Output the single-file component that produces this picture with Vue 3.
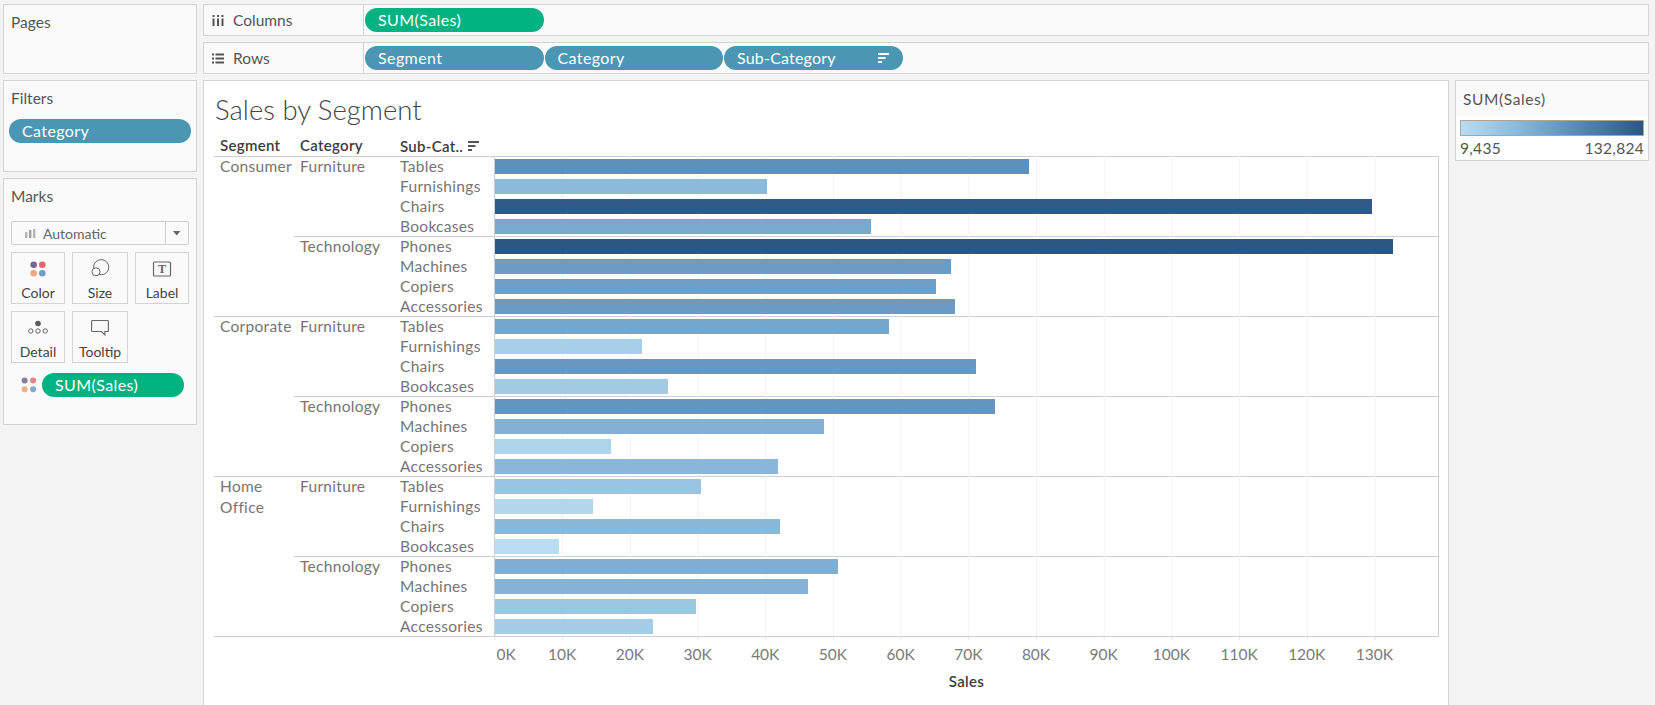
<script setup>
const data = [
  { seg: ['Consumer'], cats: [
    { name: 'Furniture', rows: [['Tables', 79.0], ['Furnishings', 40.2], ['Chairs', 129.8], ['Bookcases', 55.6]] },
    { name: 'Technology', rows: [['Phones', 132.8], ['Machines', 67.5], ['Copiers', 65.3], ['Accessories', 68.1]] }
  ] },
  { seg: ['Corporate'], cats: [
    { name: 'Furniture', rows: [['Tables', 58.3], ['Furnishings', 21.8], ['Chairs', 71.2], ['Bookcases', 25.6]] },
    { name: 'Technology', rows: [['Phones', 74.0], ['Machines', 48.6], ['Copiers', 17.1], ['Accessories', 41.9]] }
  ] },
  { seg: ['Home', 'Office'], cats: [
    { name: 'Furniture', rows: [['Tables', 30.4], ['Furnishings', 14.5], ['Chairs', 42.1], ['Bookcases', 9.5]] },
    { name: 'Technology', rows: [['Phones', 50.8], ['Machines', 46.3], ['Copiers', 29.8], ['Accessories', 23.4]] }
  ] }
]
const ticks = ['10K', '20K', '30K', '40K', '50K', '60K', '70K', '80K', '90K', '100K', '110K', '120K', '130K']
const stops = [
  [0, [185, 221, 241]],
  [0.25, [140, 186, 219]],
  [0.56, [95, 143, 187]],
  [1, [42, 87, 131]]
]
function barColor(v) {
  const t = Math.min(1, Math.max(0, (v - 9.435) / 123.389))
  let i = 0
  while (i < stops.length - 2 && t > stops[i + 1][0]) i++
  const [a, ca] = stops[i]
  const [b, cb] = stops[i + 1]
  const k = (t - a) / (b - a)
  const c = ca.map((x, j) => Math.round(x + (cb[j] - x) * k))
  return `rgb(${c[0]},${c[1]},${c[2]})`
}
function barStyle(v) {
  return { width: (v * 6.76).toFixed(1) + 'px', background: barColor(v) }
}
</script>

<template>
  <div class="page">
    <aside class="left">
      <section class="panel pages"><div class="ptitle">Pages</div></section>
      <section class="panel filters">
        <div class="ptitle">Filters</div>
        <div class="pill blue filter-pill">Category</div>
      </section>
      <section class="panel marks">
        <div class="ptitle">Marks</div>
        <div class="dropdown">
          <div class="dd-main">
            <svg width="11" height="9" viewBox="0 0 11 9"><rect x="0" y="3" width="2.4" height="6" fill="#b5b5b5"/><rect x="4" y="1" width="2.4" height="8" fill="#a0a0a0"/><rect x="8" y="0" width="2.4" height="9" fill="#b5b5b5"/></svg>
            <span>Automatic</span>
          </div>
          <div class="dd-arrow"><svg width="8" height="5" viewBox="0 0 8 5"><path d="M0 0h7.400L3.700 4.400z" fill="#666"/></svg></div>
        </div>
        <div class="cards">
          <div class="card">
            <svg class="ic" width="20" height="20" viewBox="0 0 20 20"><circle cx="5.700" cy="5.700" r="3.300" fill="#7b6491"/><circle cx="14.300" cy="5.700" r="3.300" fill="#e8636f"/><circle cx="5.700" cy="14.300" r="3.300" fill="#f2a77c"/><circle cx="14.300" cy="14.300" r="3.300" fill="#6f9bc9"/></svg>
            <span>Color</span>
          </div>
          <div class="card">
            <svg class="ic" width="20" height="20" viewBox="0 0 20 20"><circle cx="11.200" cy="8.200" r="7.600" fill="none" stroke="#666" stroke-width="1"/><circle cx="6" cy="12.800" r="4" fill="#fafafa" stroke="#666" stroke-width="1"/></svg>
            <span>Size</span>
          </div>
          <div class="card">
            <svg class="ic" width="20" height="20" viewBox="0 0 20 20"><rect x="1.500" y="3" width="17" height="14" rx="1" fill="none" stroke="#666" stroke-width="1.200"/><text x="10" y="14.200" text-anchor="middle" class="t-glyph">T</text></svg>
            <span>Label</span>
          </div>
          <div class="card">
            <svg class="ic" width="20" height="20" viewBox="0 0 20 20"><circle cx="10" cy="5.500" r="2.800" fill="#5a5a5a"/><circle cx="2.800" cy="13" r="2.200" fill="none" stroke="#666"/><circle cx="10" cy="13" r="2.200" fill="none" stroke="#666"/><circle cx="17.200" cy="13" r="2.200" fill="none" stroke="#666"/></svg>
            <span>Detail</span>
          </div>
          <div class="card">
            <svg class="ic" width="20" height="20" viewBox="0 0 20 20"><path d="M2.500 2.500h15a.9.9 0 0 1 .9.9v9.200a.9.9 0 0 1-.9.9h-2.600v3.400l-3.400-3.400H2.500a.9.9 0 0 1-.9-.9V3.400a.9.9 0 0 1 .9-.9z" fill="none" stroke="#666" stroke-width="1.100"/></svg>
            <span>Tooltip</span>
          </div>
        </div>
        <div class="mark-field">
          <svg width="16" height="16" viewBox="0 0 16 16"><circle cx="3.600" cy="3.500" r="3" fill="#8a7a9e"/><circle cx="12.100" cy="3.500" r="3" fill="#e8838c"/><circle cx="3.600" cy="12.300" r="3" fill="#f0ae88"/><circle cx="12.100" cy="12.300" r="3" fill="#86a8cf"/></svg>
          <div class="pill green mark-pill">SUM(Sales)</div>
        </div>
      </section>
    </aside>

    <main class="right">
      <div class="shelf">
        <div class="shelf-label">
          <svg width="12" height="11" viewBox="0 0 12 11"><g fill="#555"><rect x="0.500" y="0" width="2" height="2"/><rect x="5" y="0" width="2" height="2"/><rect x="9.500" y="0" width="2" height="2"/><rect x="0.500" y="3.500" width="2" height="7.500"/><rect x="5" y="3.500" width="2" height="7.500"/><rect x="9.500" y="3.500" width="2" height="7.500"/></g></svg>
          <span>Columns</span>
        </div>
        <div class="shelf-pills"><div class="pill green shelf-pill">SUM(Sales)</div></div>
      </div>
      <div class="shelf">
        <div class="shelf-label">
          <svg width="12" height="11" viewBox="0 0 12 11"><g fill="#555"><rect x="0" y="0.500" width="2" height="2"/><rect x="3.500" y="0.500" width="8.500" height="2"/><rect x="0" y="4.500" width="2" height="2"/><rect x="3.500" y="4.500" width="8.500" height="2"/><rect x="0" y="8.500" width="2" height="2"/><rect x="3.500" y="8.500" width="8.500" height="2"/></g></svg>
          <span>Rows</span>
        </div>
        <div class="shelf-pills">
          <div class="pill blue shelf-pill">Segment</div>
          <div class="pill blue shelf-pill">Category</div>
          <div class="pill blue shelf-pill sorted">
            <span>Sub-Category</span>
            <svg width="11" height="10" viewBox="0 0 11 10"><g fill="#fff"><rect x="0" y="0" width="11" height="2"/><rect x="0" y="4" width="7.500" height="2"/><rect x="0" y="8" width="4" height="2"/></g></svg>
          </div>
        </div>
      </div>

      <div class="work">
        <section class="viz">
          <h1 class="title">Sales by Segment</h1>
          <div class="chart">
            <div class="head">
              <div class="c-seg">Segment</div>
              <div class="c-cat">Category</div>
              <div class="c-sub">
                <span>Sub-Cat..</span>
                <svg width="11" height="10" viewBox="0 0 11 10"><g fill="#555"><rect x="0" y="0" width="11" height="2"/><rect x="0" y="4" width="7.500" height="2"/><rect x="0" y="8" width="4" height="2"/></g></svg>
              </div>
            </div>
            <div class="body">
              <div v-for="(s, si) in data" :key="si" class="seg">
                <div class="c-seg">
                  <div v-for="w in s.seg" :key="w">{{ w }}</div>
                </div>
                <div class="seg-body">
                  <div v-for="c in s.cats" :key="c.name" class="cat">
                    <div class="c-cat">{{ c.name }}</div>
                    <div class="cat-body">
                      <div v-for="r in c.rows" :key="r[0]" class="row">
                        <div class="c-sub">{{ r[0] }}</div>
                        <div class="plot"><div class="bar" :style="barStyle(r[1])"></div></div>
                      </div>
                    </div>
                  </div>
                </div>
              </div>
            </div>
            <div class="axis">
              <div class="tickmarks"></div>
              <div class="ticklabels">
                <div class="tl zero">0K</div>
                <div v-for="t in ticks" :key="t" class="tl">{{ t }}</div>
              </div>
              <div class="axis-title">Sales</div>
            </div>
          </div>
        </section>
        <section class="legend">
          <div class="ltitle">SUM(Sales)</div>
          <div class="lbody">
            <div class="lbar"></div>
            <div class="lrange"><span>9,435</span><span>132,824</span></div>
          </div>
        </section>
      </div>
    </main>
  </div>
</template>

<style scoped>
.page {
  box-sizing: border-box;
  width: 1655px;
  height: 705px;
  overflow: hidden;
  display: flex;
  gap: 6px;
  padding: 4px 6px 0 3px;
  background: #f4f4f4;
  font-family: Lato, "Open Sans", sans-serif;
  font-size: 15.500px;
  color: #555;
}
.left {
  width: 194px;
  flex: none;
  display: flex;
  flex-direction: column;
  gap: 6px;
}
.panel {
  box-sizing: border-box;
  background: #fafafa;
  border: 1px solid #d4d4d4;
}
.pages { height: 70px; }
.filters { height: 92px; }
.marks { height: 247px; }
.ptitle {
  height: 36px;
  line-height: 34px;
  padding-left: 7px;
  font-size: 15.500px;
  color: #555;
}
.pill {
  box-sizing: border-box;
  height: 24px;
  line-height: 24px;
  border-radius: 12px;
  padding-left: 13px;
  color: #fff;
  font-size: 16px;
  letter-spacing: 0.400px;
}
.green { background: #00b381; }
.blue { background: #4a96b3; }
.filter-pill { margin: 2px 0 0 5px; width: 182px; }
.dropdown {
  box-sizing: border-box;
  display: flex;
  margin: 6px 7px 7px;
  height: 24px;
  width: 178px;
  background: #fafafa;
  border: 1px solid #cfcfcf;
  border-radius: 2px;
}
.dd-main {
  flex: 1;
  display: flex;
  align-items: center;
  gap: 7px;
  padding-left: 13px;
  font-size: 14px;
  color: #666;
  border-right: 1px solid #cfcfcf;
}
.dd-arrow {
  width: 22px;
  display: flex;
  align-items: center;
  justify-content: center;
}
.cards {
  display: grid;
  grid-template-columns: 54px 56px 54px;
  grid-auto-rows: 52px;
  gap: 7px;
  margin-left: 7px;
}
.card {
  box-sizing: border-box;
  display: flex;
  flex-direction: column;
  align-items: center;
  border: 1px solid #d4d4d4;
  font-size: 14px;
  line-height: 20px;
  color: #444;
}
.ic { margin-top: 6px; margin-bottom: 4px; }
.t-glyph {
  font-family: "Liberation Serif", serif;
  font-weight: 700;
  font-size: 12px;
  fill: #666;
}
.mark-field {
  display: flex;
  align-items: center;
  gap: 4px;
  margin: 10px 0 0 17px;
}
.mark-pill { width: 142px; padding-left: 13px; margin-left: 1px; }

.right {
  flex: 1;
  min-width: 0;
  display: flex;
  flex-direction: column;
  gap: 6px;
}
.shelf {
  box-sizing: border-box;
  height: 32px;
  display: flex;
  flex: none;
  background: #fafafa;
  border: 1px solid #d4d4d4;
}
.shelf-label {
  box-sizing: border-box;
  width: 160px;
  flex: none;
  display: flex;
  align-items: center;
  gap: 9px;
  padding-left: 8px;
  border-right: 1px solid #d4d4d4;
  color: #555;
}
.shelf-pills {
  display: flex;
  align-items: center;
  gap: 1px;
  padding-left: 1px;
}
.shelf-pill { width: 178.500px; }
.sorted {
  display: flex;
  align-items: center;
  justify-content: space-between;
  padding-right: 14px;
  letter-spacing: 0.200px;
}
.work {
  flex: 1;
  display: flex;
  gap: 6px;
  min-height: 0;
}
.viz {
  box-sizing: border-box;
  width: 1246px;
  flex: none;
  height: 640px;
  background: #fff;
  border: 1px solid #d4d4d4;
}
.title {
  margin: 0;
  padding: 12px 0 0 11px;
  height: 55px;
  box-sizing: border-box;
  line-height: 34px;
  font-size: 27.500px;
  font-weight: 300;
  color: #444;
}
.chart {
  width: 1225px;
  margin-left: 10px;
}
.head {
  display: flex;
  height: 20px;
  line-height: 18px;
  font-weight: 600;
  font-size: 15px;
  letter-spacing: 0.300px;
  color: #3c3c3c;
}
.c-seg {
  box-sizing: border-box;
  width: 80px;
  flex: none;
  padding-left: 6px;
}
.c-cat {
  box-sizing: border-box;
  width: 99px;
  flex: none;
  padding-left: 6px;
}
.c-sub {
  box-sizing: border-box;
  width: 101px;
  flex: none;
  padding-left: 7px;
  display: flex;
  align-items: center;
  gap: 5px;
}
.body {
  border-bottom: 1px solid #cfcfcf;
  line-height: 21px;
  font-size: 15.500px;
  letter-spacing: 0.300px;
  color: #757575;
}
.seg {
  display: flex;
  box-shadow: inset 0 1px 0 #cfcfcf;
}
.seg-body { flex: 1; }
.cat {
  display: flex;
  box-shadow: inset 0 1px 0 #cfcfcf;
}
.cat-body { flex: 1; }
.row {
  display: flex;
  height: 20px;
}
.plot {
  flex: 1;
  box-sizing: border-box;
  padding-top: 3px;
  border-left: 1px solid #cfcfcf;
  border-right: 1px solid #cfcfcf;
  background: linear-gradient(to right, #f3f3f3 1px, transparent 1px) -0.500px 0 / 67.700px 100%;
}
.bar { height: 15px; }
.axis { margin-left: 280px; }
.tickmarks {
  height: 3px;
  background: linear-gradient(to right, #e6e6e6 1px, transparent 1px) 0.500px 0 / 67.700px 100%;
}
.ticklabels {
  display: flex;
  margin-top: 4px;
  margin-left: 0.500px;
  height: 20px;
  line-height: 20px;
  font-size: 15.500px;
  color: #7a7a7a;
}
.tl {
  width: 67.700px;
  flex: none;
  text-align: center;
  white-space: nowrap;
}
.tl.zero {
  width: 33.850px;
  text-align: left;
  padding-left: 2px;
  box-sizing: border-box;
}
.axis-title {
  margin-top: 7px;
  line-height: 20px;
  text-align: center;
  font-weight: 600;
  font-size: 15px;
  letter-spacing: 0.300px;
  color: #3c3c3c;
}
.legend {
  box-sizing: border-box;
  flex: 1;
  height: 81px;
  background: #fff;
  border: 1px solid #d4d4d4;
}
.ltitle {
  height: 35px;
  line-height: 36px;
  padding-left: 7px;
  background: #fafafa;
  letter-spacing: 0.600px;
  color: #555;
}
.lbody { padding: 4px 4px 0; }
.lbar {
  box-sizing: border-box;
  height: 16px;
  border: 1px solid #a9a59b;
  background: linear-gradient(to right, #b9ddf1, #8cbadb 30%, #5f8fbb 60%, #2a5783);
}
.lrange {
  display: flex;
  justify-content: space-between;
  margin-top: 2px;
  line-height: 20px;
  letter-spacing: 0.300px;
  color: #555;
}
</style>
